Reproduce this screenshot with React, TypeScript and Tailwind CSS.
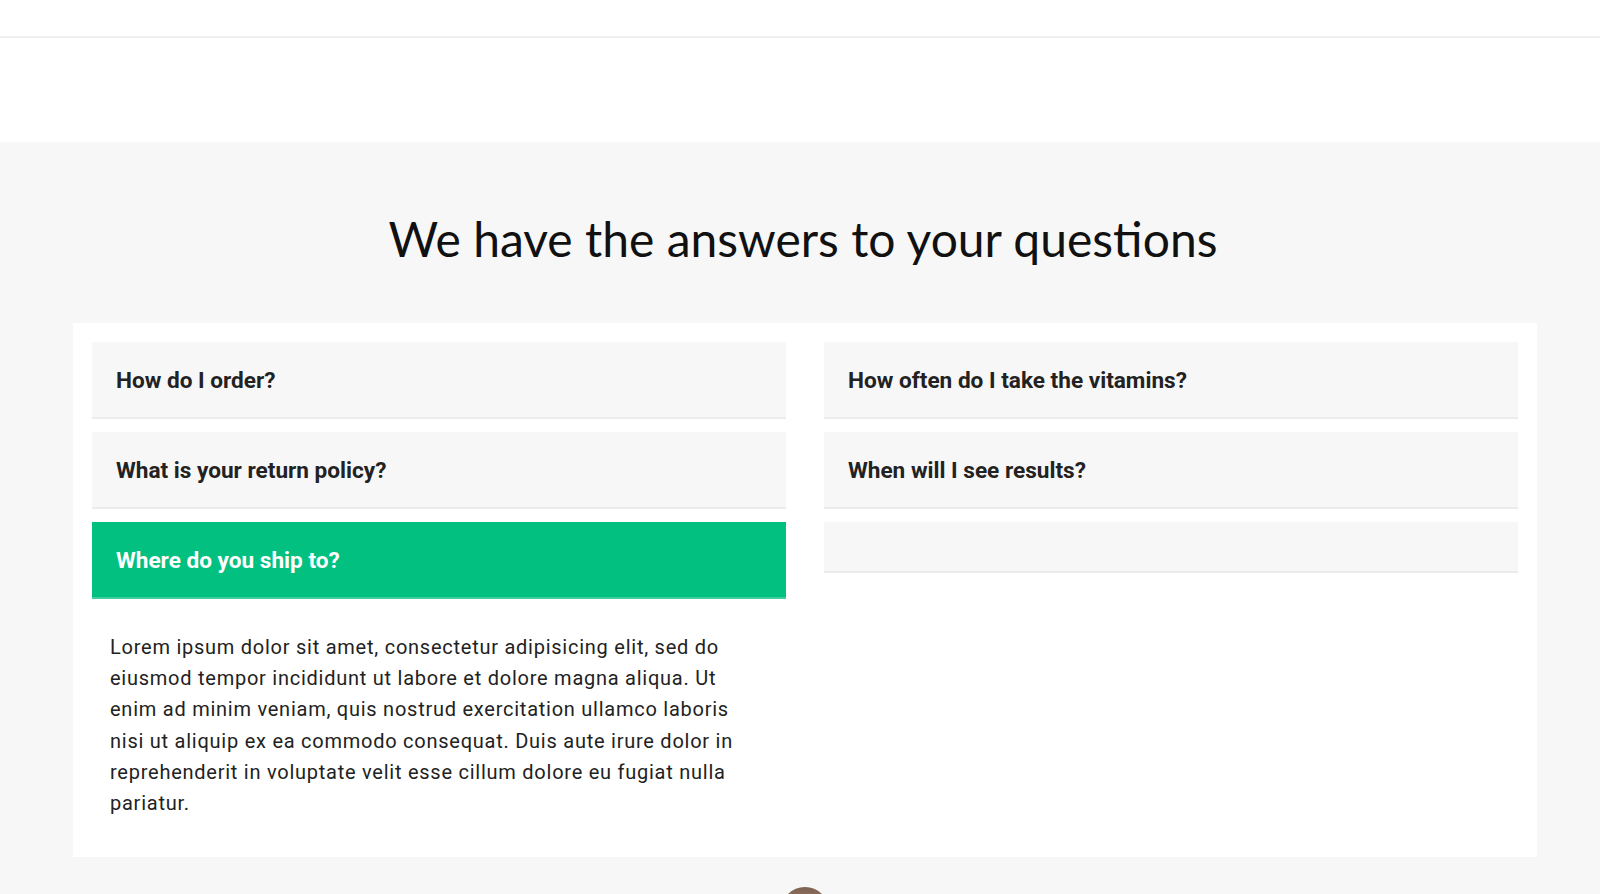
import React, { useState } from 'react';

type Faq = {
  question: string;
  answer?: string;
};

const lorem =
  'Lorem ipsum dolor sit amet, consectetur adipisicing elit, sed do eiusmod tempor incididunt ut labore et dolore magna aliqua. Ut enim ad minim veniam, quis nostrud exercitation ullamco laboris nisi ut aliquip ex ea commodo consequat. Duis aute irure dolor in reprehenderit in voluptate velit esse cillum dolore eu fugiat nulla pariatur.';

const leftFaqs: Faq[] = [
  { question: 'How do I order?', answer: lorem },
  { question: 'What is your return policy?', answer: lorem },
  { question: 'Where do you ship to?', answer: lorem },
];

const rightFaqs: Faq[] = [
  { question: 'How often do I take the vitamins?', answer: lorem },
  { question: 'When will I see results?', answer: lorem },
  { question: '' },
];

function FaqItem({ faq, open, onToggle }: { faq: Faq; open: boolean; onToggle: () => void }) {
  if (!faq.question) {
    return <div className="h-[51px] mb-[13px] bg-[#f7f7f7] border-b-2 border-[#ececec]" />;
  }

  return (
    <div className="mb-[13px]">
      <button
        type="button"
        onClick={onToggle}
        className={
          open
            ? 'w-full h-[77px] flex items-center pl-[24px] pt-[3px] text-left bg-[#02c07f] border-b-2 border-[#3fcf9c] text-white'
            : 'w-full h-[77px] flex items-center pl-[24px] pt-[3px] text-left bg-[#f7f7f7] border-b-2 border-[#ececec] text-[#222]'
        }
      >
        <span className="text-[22.6px] font-bold">{faq.question}</span>
      </button>
      {open && faq.answer && (
        <p className="w-[660px] pl-[18px] pt-[33px] pb-[6px] text-[20px] leading-[31.2px] tracking-[0.75px] text-[#222]">
          {faq.answer}
        </p>
      )}
    </div>
  );
}

export default function App() {
  const [openKey, setOpenKey] = useState('left-2');

  const toggle = (key: string) => setOpenKey(openKey === key ? '' : key);

  return (
    <div className="min-h-screen bg-white" style={{ fontFamily: 'Roboto, "Liberation Sans", sans-serif' }}>
      <header className="h-[38px] bg-white border-b-2 border-[#efefef]" />
      <div className="h-[104px] bg-white" />

      <section className="bg-[#f7f7f7] pb-10">
        <h2
          className="pt-[68px] pb-[55px] text-center text-[48px] leading-[58px] text-[#111] pl-[6px]"
          style={{ fontFamily: 'Lato, "Noto Sans", sans-serif' }}
        >
          We have the answers to your questions
        </h2>

        <div className="ml-[73px] w-[1464px] bg-white px-[19px] pt-[19px] pb-[19px] flex gap-[38px]">
          <div className="w-[694px]">
            {leftFaqs.map((faq, i) => (
              <FaqItem key={i} faq={faq} open={openKey === `left-${i}`} onToggle={() => toggle(`left-${i}`)} />
            ))}
          </div>
          <div className="w-[694px]">
            {rightFaqs.map((faq, i) => (
              <FaqItem key={i} faq={faq} open={openKey === `right-${i}`} onToggle={() => toggle(`right-${i}`)} />
            ))}
          </div>
        </div>

        <div className="ml-[73px] w-[1464px] flex justify-center pt-[30px]">
          <div className="w-[48px] h-[48px] rounded-full bg-gradient-to-b from-[#7d6150] to-[#c9a58c]" />
        </div>
      </section>
    </div>
  );
}
